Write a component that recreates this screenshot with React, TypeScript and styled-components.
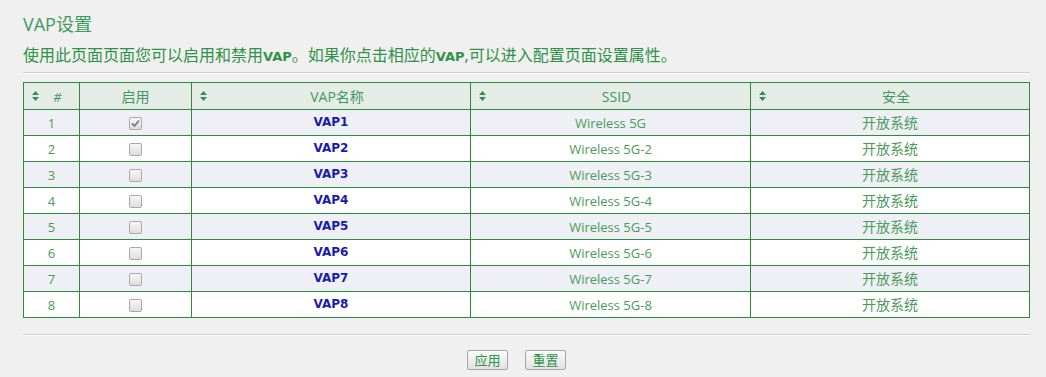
import React from "react";
import styled, { createGlobalStyle } from "styled-components";

const Global = createGlobalStyle`
  html, body { margin: 0; padding: 0; background: #f0f0f0; }
  body { font-family: "Open Sans", "Noto Sans CJK SC", sans-serif; }
`;

const Page = styled.div`
  padding: 12px 16px 0 23px;
`;

const Title = styled.h1`
  margin: 0;
  font-size: 18px;
  line-height: 24px;
  font-weight: normal;
  color: #3d9a5b;
`;

const Intro = styled.p`
  margin: 8px 0 0;
  font-size: 16px;
  line-height: 22px;
  color: #2e9247;
  b { font-family: "DejaVu Sans", sans-serif; font-size: 13px; }
`;

const Rule = styled.div<{ $top: number }>`
  margin-top: ${(p) => p.$top}px;
  border-top: 1px solid #cfcfcf;
  border-bottom: 1px solid #fafafa;
`;

const Table = styled.table`
  margin-top: 8px;
  width: 100%;
  border-collapse: collapse;
  table-layout: fixed;
  font-size: 13px;
  color: #4a9a5a;
`;

const Head = styled.th<{ $sort?: boolean }>`
  position: relative;
  height: 26px;
  padding: 0 0 0 ${(p) => (p.$sort ? 12 : 0)}px;
  border: 1px solid #2d8c3c;
  background: #e5ece8;
  font-weight: normal;
  font-size: 14px;
  color: #3d9a5b;
  text-align: center;
`;

const Hash = styled.span`
  font-style: italic;
  font-size: 13px;
`;

const SortIcon = styled.svg`
  position: absolute;
  left: 8px;
  top: 50%;
  margin-top: -5px;
`;

const Row = styled.tr<{ $odd: boolean }>`
  background: ${(p) => (p.$odd ? "#eef0f5" : "#ffffff")};
`;

const Cell = styled.td`
  height: 25px;
  padding: 0;
  border: 1px solid #2d8c3c;
  text-align: center;
  vertical-align: middle;
  line-height: 18px;
`;

const Name = styled.a`
  font-family: "DejaVu Sans", sans-serif;
  font-weight: bold;
  font-size: 12px;
  color: #1a1aad;
  text-decoration: none;
  position: relative;
  top: -1px;
`;

const Security = styled.span`
  font-size: 14px;
`;

const Box = styled.span`
  display: inline-block;
  width: 11px;
  height: 11px;
  border: 1px solid #a9a9a9;
  border-radius: 2px;
  background: linear-gradient(#f7f7f7, #dedede);
  vertical-align: middle;
  position: relative;
  top: -1px;
  svg { display: block; }
`;

const Buttons = styled.div`
  display: flex;
  justify-content: center;
  gap: 17px;
  margin-top: 14px;
  padding-right: 20px;
`;

const Button = styled.button`
  width: 41px;
  height: 20px;
  padding: 0;
  border: 1px solid #a5a5a5;
  border-radius: 2px;
  background: linear-gradient(#fbfbfb, #e2e2e2);
  font-family: "Noto Sans CJK SC", sans-serif;
  font-size: 13px;
  line-height: 18px;
  color: #2e9247;
`;

const Sort = () => (
  <SortIcon width="7" height="10" viewBox="0 0 7 10">
    <polygon points="3.5,0 7,4 0,4" fill="#2e9247" />
    <polygon points="0,6 7,6 3.5,10" fill="#2e9247" />
  </SortIcon>
);

const Check = ({ on }: { on: boolean }) => (
  <Box>
    {on && (
      <svg width="11" height="11" viewBox="0 0 11 11">
        <path d="M2 5.5 L4.5 8 L9 2.5" stroke="#7a7a7a" strokeWidth="1.8" fill="none" />
      </svg>
    )}
  </Box>
);

const rows = Array.from({ length: 8 }, (_, i) => ({
  n: i + 1,
  on: i === 0,
  name: `VAP${i + 1}`,
  ssid: i === 0 ? "Wireless 5G" : `Wireless 5G-${i + 1}`,
  sec: "开放系统",
}));

export default function App() {
  return (
    <>
      <Global />
      <Page>
        <Title>VAP设置</Title>
        <Intro>
          使用此页面页面您可以启用和禁用<b>VAP</b>。如果你点击相应的<b>VAP</b>,可以进入配置页面设置属性。
        </Intro>
        <Rule $top={4} />
        <Table>
          <colgroup>
            <col style={{ width: 56 }} />
            <col style={{ width: 112 }} />
            <col style={{ width: 279 }} />
            <col style={{ width: 280 }} />
            <col />
          </colgroup>
          <thead>
            <tr>
              <Head $sort><Sort /><Hash>#</Hash></Head>
              <Head>启用</Head>
              <Head $sort><Sort />VAP名称</Head>
              <Head $sort><Sort />SSID</Head>
              <Head $sort><Sort />安全</Head>
            </tr>
          </thead>
          <tbody>
            {rows.map((r) => (
              <Row key={r.n} $odd={r.n % 2 === 1}>
                <Cell>{r.n}</Cell>
                <Cell><Check on={r.on} /></Cell>
                <Cell><Name href="#">{r.name}</Name></Cell>
                <Cell>{r.ssid}</Cell>
                <Cell><Security>{r.sec}</Security></Cell>
              </Row>
            ))}
          </tbody>
        </Table>
        <Rule $top={16} />
        <Buttons>
          <Button>应用</Button>
          <Button>重置</Button>
        </Buttons>
      </Page>
    </>
  );
}
